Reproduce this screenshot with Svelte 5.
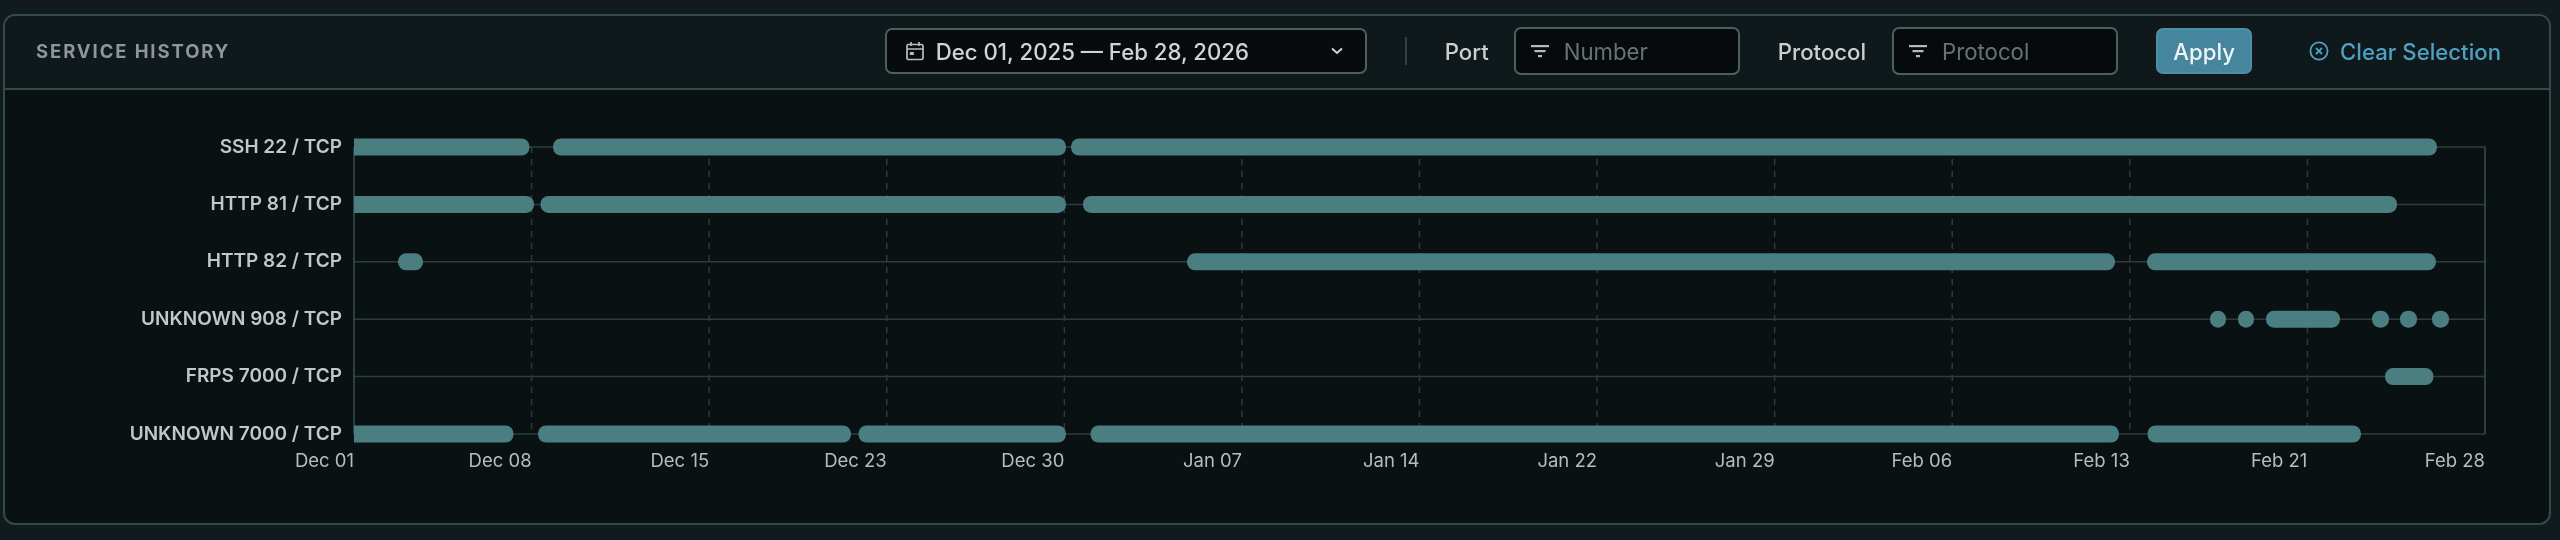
<script lang="ts">
  const rowGap = 57.4;
  const plotLeft = 349;
  const plotRight = 2480;
  const plotTop = 57;

  const ticks = ['Dec 01', 'Dec 08', 'Dec 15', 'Dec 23', 'Dec 30', 'Jan 07', 'Jan 14', 'Jan 22', 'Jan 29', 'Feb 06', 'Feb 13', 'Feb 21', 'Feb 28'];
  const tickStep = (plotRight - plotLeft) / (ticks.length - 1);

  // spans are page x coordinates of each uptime segment
  const rows = [
    { label: 'SSH 22 / TCP', spans: [[354, 529.5], [553, 1066], [1071, 2437]] },
    { label: 'HTTP 81 / TCP', spans: [[354, 534], [540.5, 1066], [1083, 2397]] },
    { label: 'HTTP 82 / TCP', spans: [[398, 423], [1187, 2115], [2147, 2436]] },
    { label: 'UNKNOWN 908 / TCP', spans: [[2210, 2226], [2238, 2254], [2266, 2340], [2372, 2389], [2400, 2417], [2432, 2449]] },
    { label: 'FRPS 7000 / TCP', spans: [[2385, 2433.5]] },
    { label: 'UNKNOWN 7000 / TCP', spans: [[354, 513.5], [538, 851], [858.5, 1066], [1090.5, 2119], [2147.5, 2361]] }
  ];

  const rowY = (i: number) => plotTop + i * rowGap;
  const plotBottom = rowY(rows.length - 1);
</script>

<section class="panel">
  <header class="head">
    <h2 class="title">SERVICE HISTORY</h2>

    <div class="filters">
      <button class="range">
        <svg class="cal" viewBox="0 0 20 20" width="20" height="20" fill="none" stroke="currentColor" stroke-width="1.7">
          <rect x="2" y="3.5" width="16" height="15" rx="1.5" />
          <path d="M2 8h16M6 1v4M14 1v4" />
          <rect x="4.8" y="11" width="4" height="3" fill="currentColor" stroke="none" />
        </svg>
        <span>Dec 01, 2025 — Feb 28, 2026</span>
        <svg class="chev" viewBox="0 0 12 8" width="12" height="8" fill="none" stroke="currentColor" stroke-width="2">
          <path d="M1 1.5l5 4.5 5-4.5" />
        </svg>
      </button>

      <span class="divider"></span>

      <span class="field-label port">Port</span>
      <div class="input">
        <svg viewBox="0 0 18 14" width="18" height="14" fill="currentColor">
          <rect x="0" y="1" width="18" height="2.2" />
          <rect x="3.5" y="6" width="11" height="2.2" />
          <rect x="7" y="11" width="4" height="2.2" />
        </svg>
        <span>Number</span>
      </div>

      <span class="field-label proto">Protocol</span>
      <div class="input">
        <svg viewBox="0 0 18 14" width="18" height="14" fill="currentColor">
          <rect x="0" y="1" width="18" height="2.2" />
          <rect x="3.5" y="6" width="11" height="2.2" />
          <rect x="7" y="11" width="4" height="2.2" />
        </svg>
        <span>Protocol</span>
      </div>

      <button class="apply">Apply</button>

      <button class="clear">
        <svg viewBox="0 0 20 20" width="20" height="20" fill="none" stroke="currentColor" stroke-width="1.8">
          <circle cx="10" cy="10" r="8.6" />
          <path d="M7 7l6 6M13 7l-6 6" />
        </svg>
        <span>Clear Selection</span>
      </button>
    </div>
  </header>

  <div class="chart">
    <svg width="2542" height="433" viewBox="0 0 2542 433">
      {#each ticks.slice(1, -1) as _, i}
        <line class="grid-v" x1={plotLeft + (i + 1) * tickStep} x2={plotLeft + (i + 1) * tickStep} y1={plotTop} y2={plotBottom} />
      {/each}

      {#each rows as _, i}
        <line class="grid-h" x1={plotLeft} x2={plotRight} y1={rowY(i)} y2={rowY(i)} />
      {/each}
      <line class="axis" x1={plotLeft} x2={plotLeft} y1={plotTop} y2={plotBottom} />
      <line class="axis" x1={plotRight} x2={plotRight} y1={plotTop} y2={plotBottom} />

      <clipPath id="plot-clip">
        <rect x={plotLeft} y={plotTop - 10} width={plotRight - plotLeft} height={plotBottom - plotTop + 20} />
      </clipPath>

      {#each rows as row, i}
        <text class="row-label" x={plotLeft - 12} y={rowY(i) - 1} text-anchor="end" dominant-baseline="central">{row.label}</text>
        <g clip-path="url(#plot-clip)">
          {#each row.spans as [from, to]}
            <!-- spans are in page coords, the svg starts 5px in -->
            <rect class="bar" x={from === 354 ? plotLeft - 9 : from - 5} y={rowY(i) - 8.5} width={from === 354 ? to - 354 + 9 : to - from} height="17" rx="8" />
          {/each}
        </g>
      {/each}

      {#each ticks as tick, i}
        <text class="tick" x={plotLeft + i * tickStep} y={plotBottom + 26} text-anchor="end" dominant-baseline="central">{tick}</text>
      {/each}
    </svg>
  </div>
</section>

<style>
  :global(body) {
    margin: 0;
    background: #111b1d;
  }

  .panel {
    box-sizing: border-box;
    width: 2548px;
    height: 511px;
    margin: 14px 0 0 3px;
    border: 2px solid #344a48;
    border-radius: 12px;
    overflow: hidden;
    background: #0a1113;
    font-family: Inter, "Liberation Sans", sans-serif;
    filter: blur(0.45px);
  }

  .head {
    box-sizing: border-box;
    height: 74px;
    display: flex;
    align-items: center;
    justify-content: space-between;
    padding: 0 48px 2px 31px;
    background: #0f181a;
    border-bottom: 2px solid #344a48;
  }

  .title {
    margin: 0;
    font-size: 18.5px;
    font-weight: 700;
    letter-spacing: 1.9px;
    color: #8f9699;
  }

  .filters {
    display: flex;
    align-items: center;
  }

  button {
    font: inherit;
    cursor: pointer;
  }

  .range {
    box-sizing: border-box;
    width: 482px;
    height: 46px;
    display: flex;
    align-items: center;
    gap: 11px;
    padding: 0 22px 0 18px;
    border: 2px solid #4c605e;
    border-radius: 7px;
    background: #070b0d;
    color: #d0d4d4;
    font-size: 22.2px;
    font-weight: 500;
  }

  .cal {
    color: #b8bdbd;
    flex: none;
  }

  .chev {
    margin-left: auto;
    color: #d0d4d4;
  }

  .divider {
    width: 2px;
    height: 28px;
    margin: 0 38px 0 38px;
    background: #33403f;
  }

  .field-label {
    font-size: 22.2px;
    font-weight: 500;
    color: #cccfcf;
  }

  .port {
    margin-right: 25px;
  }

  .proto {
    margin: 0 26px 0 38px;
  }

  .input {
    box-sizing: border-box;
    width: 226px;
    height: 48px;
    display: flex;
    align-items: center;
    gap: 15px;
    padding: 0 15px;
    border: 2px solid #4c605e;
    border-radius: 7px;
    background: #060a0c;
    color: #b5baba;
    font-size: 22.2px;
  }

  .input span {
    color: #667474;
  }

  .apply {
    box-sizing: border-box;
    width: 96px;
    height: 46px;
    margin-left: 38px;
    padding: 0;
    border: 2px solid #4f8ea8;
    border-radius: 7px;
    background: #46859e;
    color: #eef3f5;
    font-size: 22.2px;
    font-weight: 500;
  }

  .clear {
    display: flex;
    align-items: center;
    gap: 11px;
    margin-left: 57px;
    padding: 0;
    border: 0;
    background: none;
    color: #4ea1c2;
    font-size: 22.2px;
    font-weight: 500;
  }

  .chart svg {
    display: block;
  }

  .grid-v {
    stroke: #303a3a;
    stroke-width: 1.5;
    stroke-dasharray: 6 6;
  }

  .grid-h {
    stroke: #2e3d3c;
    stroke-width: 1.5;
  }

  .axis {
    stroke: #3a4e50;
    stroke-width: 1.5;
  }

  .bar {
    fill: #4a7e80;
  }

  .row-label {
    font-size: 19px;
    font-weight: 600;
    fill: #c4c7c7;
  }

  .tick {
    font-size: 18.5px;
    fill: #b9bcbc;
  }
</style>
